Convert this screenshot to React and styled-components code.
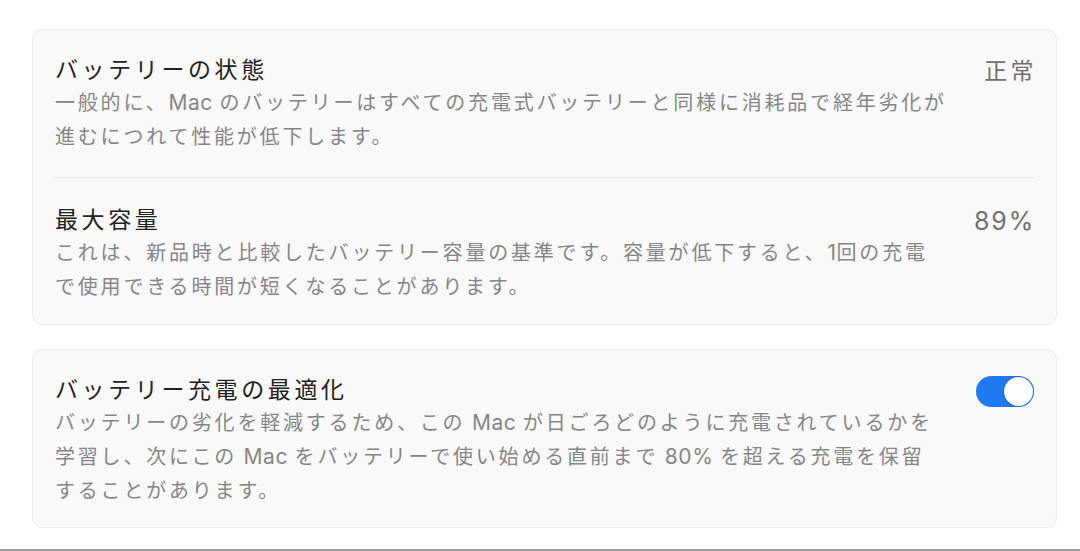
import styled, { createGlobalStyle } from "styled-components";

const GlobalStyle = createGlobalStyle`
  html, body {
    margin: 0;
    padding: 0;
    background: #ffffff;
  }
  body {
    font-family: "Inter", "Noto Sans CJK JP", sans-serif;
    -webkit-font-smoothing: antialiased;
  }
`;

const Page = styled.div`
  width: 1080px;
  height: 551px;
  box-sizing: border-box;
  padding: 29px 23px 0 32px;
  border-bottom: 2px solid #9b9b9b;
  display: flex;
  flex-direction: column;
  gap: 24px;
`;

const Card = styled.section`
  background: #f9f9f9;
  border: 1px solid #ececec;
  border-radius: 10px;
  padding: 0 22px;
  display: flex;
  flex-direction: column;
`;

const Row = styled.div`
  display: flex;
  justify-content: space-between;
  align-items: flex-start;
  padding: ${(p) => p.$pad || "24px 0 22px"};
  & + & {
    border-top: 1px solid #e6e6e6;
  }
`;

const Text = styled.div`
  display: flex;
  flex-direction: column;
`;

const Title = styled.div`
  font-size: 23px;
  line-height: 32px;
  letter-spacing: 3.6px;
  color: #222222;
`;

const Desc = styled.div`
  font-size: 20px;
  line-height: 34px;
  letter-spacing: 2.8px;
  color: #868686;
  white-space: nowrap;
`;

const Latin = styled.span`
  font-size: 21px;
  letter-spacing: 0.6px;
`;

const Value = styled.div`
  font-size: ${(p) => (p.$num ? 25 : 23)}px;
  line-height: 32px;
  letter-spacing: ${(p) => (p.$num ? 1.8 : 3.4)}px;
  margin-right: ${(p) => (p.$num ? -1 : -3)}px;
  color: #707070;
  padding-top: 1px;
`;

const Toggle = styled.div`
  width: 58px;
  height: 31px;
  border-radius: 16px;
  background: #1f7af2;
  margin-top: 2px;
  display: flex;
  align-items: center;
  justify-content: flex-end;
  padding: 0 1px;
  box-sizing: border-box;
`;

const Knob = styled.div`
  width: 29px;
  height: 29px;
  border-radius: 50%;
  background: #ffffff;
  box-shadow: 0 0 0 1px rgba(0, 0, 0, 0.14);
`;

export default function App() {
  return (
    <>
      <GlobalStyle />
      <Page>
        <Card>
          <Row $pad="24px 0 23px">
            <Text>
              <Title>バッテリーの状態</Title>
              <Desc>
                一般的に、<Latin>Mac </Latin>のバッテリーはすべての充電式バッテリーと同様に消耗品で経年劣化が
                <br />
                進むにつれて性能が低下します。
              </Desc>
            </Text>
            <Value>正常</Value>
          </Row>
          <Row $pad="26px 0 20px">
            <Text>
              <Title>最大容量</Title>
              <Desc>
                これは、新品時と比較したバッテリー容量の基準です。容量が低下すると、<Latin>1</Latin>回の充電
                <br />
                で使用できる時間が短くなることがあります。
              </Desc>
            </Text>
            <Value $num>89%</Value>
          </Row>
        </Card>
        <Card>
          <Row $pad="24px 0 19px">
            <Text>
              <Title>バッテリー充電の最適化</Title>
              <Desc>
                バッテリーの劣化を軽減するため、この<Latin> Mac </Latin>が日ごろどのように充電されているかを
                <br />
                学習し、次にこの<Latin> Mac </Latin>をバッテリーで使い始める直前まで<Latin> 80% </Latin>を超える充電を保留
                <br />
                することがあります。
              </Desc>
            </Text>
            <Toggle>
              <Knob />
            </Toggle>
          </Row>
        </Card>
      </Page>
    </>
  );
}
